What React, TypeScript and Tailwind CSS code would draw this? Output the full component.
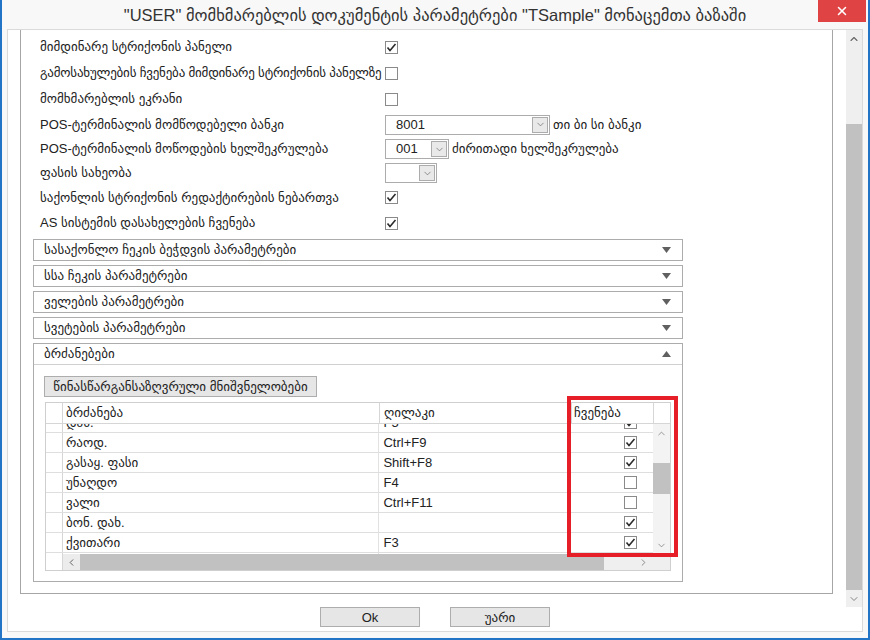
import { ChevronDown, ChevronUp, ChevronLeft, ChevronRight, X } from 'lucide-react';

function Check({ on }: { on: boolean }) {
  return (
    <div className="w-[13px] h-[13px] border border-[#8a8a8a] bg-white flex items-center justify-center">
      {on && (
        <svg width="11" height="11" viewBox="0 0 11 11">
          <polyline points="1.5,5.5 4,8.5 9.5,2" fill="none" stroke="#2b2b2b" strokeWidth="1.6" />
        </svg>
      )}
    </div>
  );
}

function Combo({ value, width }: { value: string; width: string }) {
  return (
    <div className={`${width} h-[20px] border border-[#acacac] bg-white flex items-center justify-between pl-[10px] pr-[1px]`}>
      <span className="text-[13px] text-[#222]">{value}</span>
      <div className="w-[16px] h-[16px] border border-[#acacac] bg-[#e9e9e9] flex items-center justify-center">
        <ChevronDown className="w-[11px] h-[11px] text-[#666]" strokeWidth={1.5} />
      </div>
    </div>
  );
}

function SettingRow({ h, label, tight, children }: { h: string; label: string; tight?: boolean; children: React.ReactNode }) {
  return (
    <div className={`${h} flex items-center pl-[19px]`}>
      <div className={`w-[345px] whitespace-nowrap text-[13px] text-[#222] ${tight ? 'tracking-[-0.2px]' : ''}`}>{label}</div>
      <div className="flex items-center gap-[3px]">{children}</div>
    </div>
  );
}

function Section({ title }: { title: string }) {
  return (
    <div className="w-[650px] h-[22px] border border-[#acacac] flex items-center justify-between pl-[10px] pr-[11px]">
      <span className="text-[13px] text-[#222]">{title}</span>
      <svg width="9" height="6" viewBox="0 0 9 6"><polygon points="0,0 9,0 4.5,6" fill="#606060" /></svg>
    </div>
  );
}

const rows = [
  { cmd: 'დახ.', key: 'F5', on: true },
  { cmd: 'რაოდ.', key: 'Ctrl+F9', on: true },
  { cmd: 'გასაყ. ფასი', key: 'Shift+F8', on: true },
  { cmd: 'უნაღდო', key: 'F4', on: false },
  { cmd: 'ვალი', key: 'Ctrl+F11', on: false },
  { cmd: 'ბონ. დახ.', key: '', on: true },
  { cmd: 'ქვითარი', key: 'F3', on: true },
  { cmd: '', key: '', on: false },
];

function CommandGrid() {
  return (
    <div className="relative ml-[1px] mt-[4px] w-[626px] border border-[#cfcfcf] text-[13px] text-[#222]">
      <div className="flex h-[21px] border-b border-[#d6d6d6]">
        <div className="w-[17px] border-r border-[#d6d6d6]" />
        <div className="w-[317px] border-r border-[#d6d6d6] pl-[3px] flex items-center">ბრძანება</div>
        <div className="w-[192px] border-r border-[#d6d6d6] pl-[4px] flex items-center">ღილაკი</div>
        <div className="w-[82px] border-r border-[#d6d6d6] pl-[2px] flex items-center">ჩვენება</div>
        <div className="flex-1" />
      </div>
      <div className="flex">
        <div className="w-[608px] h-[130px] overflow-hidden">
          <div className="-mt-[11px]">
            {rows.map((r, i) => (
              <div key={i} className="flex h-[20px] border-b border-[#dedede]">
                <div className="w-[17px] border-r border-[#d6d6d6]" />
                <div className="w-[317px] border-r border-[#e2e2e2] pl-[3px] flex items-center">{r.cmd}</div>
                <div className="w-[192px] border-r border-[#e2e2e2] pl-[4px] flex items-center font-['Liberation_Sans',sans-serif]">{r.key}</div>
                <div className="w-[82px] flex items-center justify-end pr-[16px]">{r.cmd && <Check on={r.on} />}</div>
              </div>
            ))}
          </div>
        </div>
        <div className="w-[17px] h-[130px] bg-[#f3f3f3] flex flex-col items-center">
          <div className="h-[17px] flex items-center pt-[2px]"><ChevronUp className="w-[11px] h-[11px] text-[#777]" strokeWidth={1.6} /></div>
          <div className="h-[22px]" />
          <div className="w-full h-[31px] bg-[#c1c1c1]" />
          <div className="flex-1" />
          <div className="h-[17px] flex items-center"><ChevronDown className="w-[11px] h-[11px] text-[#777]" strokeWidth={1.6} /></div>
        </div>
      </div>
      <div className="flex h-[16px]">
        <div className="w-[17px] border-r border-[#d6d6d6] bg-white" />
        <div className="w-[17px] bg-[#ececec] flex items-center justify-center"><ChevronLeft className="w-[11px] h-[11px] text-[#555]" strokeWidth={2} /></div>
        <div className="w-[524px] bg-[#c1c1c1]" />
        <div className="flex-1 bg-[#efefef] flex items-center pl-[34px]"><ChevronRight className="w-[11px] h-[11px] text-[#777]" strokeWidth={1.8} /></div>
      </div>
      <div className="absolute left-[521px] top-[-7px] w-[111px] h-[161px] border-4 border-[#e61e28]" />
    </div>
  );
}

export default function App() {
  return (
    <div className="w-[870px] h-[640px] bg-[#f8f8f8] border-x-2 border-b-2 border-[#2274c6] flex flex-col font-['Liberation_Sans','DejaVu_Sans',sans-serif]">
      <div className="relative h-[29px] flex items-center justify-center">
        <span className="text-[16.5px] text-[#333] pt-[1px]">"USER" მომხმარებლის დოკუმენტის პარამეტრები "TSample" მონაცემთა ბაზაში</span>
        <div className="absolute right-[2px] top-0 w-[48px] h-[22px] bg-[#e04343] flex items-center justify-center">
          <X className="w-[14px] h-[14px] text-white" strokeWidth={2.6} />
        </div>
      </div>
      <div className="mx-[5px] border border-[#dadada] bg-white flex flex-col h-[603px]">
        <div className="flex h-[577px]">
          <div className="pl-[12px] pr-[13px] pb-[13px]">
            <div className="w-[813px] h-[564px] border-x border-b border-[#a6a6a6] pt-[4px] overflow-hidden">
              <SettingRow h="h-[26px]" label="მიმდინარე სტრიქონის პანელი"><Check on /></SettingRow>
              <SettingRow h="h-[26px]" tight label="გამოსახულების ჩვენება მიმდინარე სტრიქონის პანელზე"><Check on={false} /></SettingRow>
              <SettingRow h="h-[26px]" label="მომხმარებლის ეკრანი"><Check on={false} /></SettingRow>
              <SettingRow h="h-[25px]" label="POS-ტერმინალის მომწოდებელი ბანკი">
                <Combo value="8001" width="w-[165px]" />
                <span className="text-[13px] text-[#222]">თი ბი სი ბანკი</span>
              </SettingRow>
              <SettingRow h="h-[24px]" label="POS-ტერმინალის მოწოდების ხელშეკრულება">
                <Combo value="001" width="w-[64px]" />
                <span className="text-[13px] text-[#222]">ძირითადი ხელშეკრულება</span>
              </SettingRow>
              <SettingRow h="h-[24px]" label="ფასის სახეობა">
                <Combo value="" width="w-[52px]" />
              </SettingRow>
              <SettingRow h="h-[25px]" label="საქონლის სტრიქონის რედაქტირების ნებართვა"><Check on /></SettingRow>
              <SettingRow h="h-[26px]" label="AS სისტემის დასახელების ჩვენება"><Check on /></SettingRow>
              <div className="ml-[12px] mt-[3px] flex flex-col gap-[4px]">
                <Section title="სასაქონლო ჩეკის ბეჭდვის პარამეტრები" />
                <Section title="სსა ჩეკის პარამეტრები" />
                <Section title="ველების პარამეტრები" />
                <Section title="სვეტების პარამეტრები" />
                <div className="w-[650px] h-[239px] border border-[#acacac]">
                  <div className="h-[21px] border-b border-[#d0d0d0] flex items-center justify-between pl-[10px] pr-[11px]">
                    <span className="text-[13px] text-[#222]">ბრძანებები</span>
                    <svg width="9" height="6" viewBox="0 0 9 6"><polygon points="0,6 9,6 4.5,0" fill="#606060" /></svg>
                  </div>
                  <div className="pl-[10px] pt-[9px]">
                    <button className="h-[21px] w-[273px] border border-[#adadad] bg-[#e6e6e6] text-[13px] text-[#222]">წინასწარგანსაზღვრული მნიშვნელობები</button>
                    <CommandGrid />
                  </div>
                </div>
              </div>
            </div>
          </div>
          <div className="w-[16px] h-[577px] bg-[#efefef] flex flex-col items-center">
            <div className="h-[18px] flex items-center"><ChevronUp className="w-[12px] h-[12px] text-[#666]" strokeWidth={2.2} /></div>
            <div className="h-[76px]" />
            <div className="w-full flex-1 bg-[#c1c1c1]" />
            <div className="h-[17px] flex items-center"><ChevronDown className="w-[12px] h-[12px] text-[#777]" strokeWidth={1.8} /></div>
          </div>
        </div>
        <div className="flex justify-center gap-[30px]">
          <button className="w-[100px] h-[20px] border border-[#adadad] bg-[#e6e6e6] text-[13px] text-[#222]">Ok</button>
          <button className="w-[100px] h-[20px] border border-[#adadad] bg-[#e6e6e6] text-[13px] text-[#222]">უარი</button>
        </div>
      </div>
    </div>
  );
}
